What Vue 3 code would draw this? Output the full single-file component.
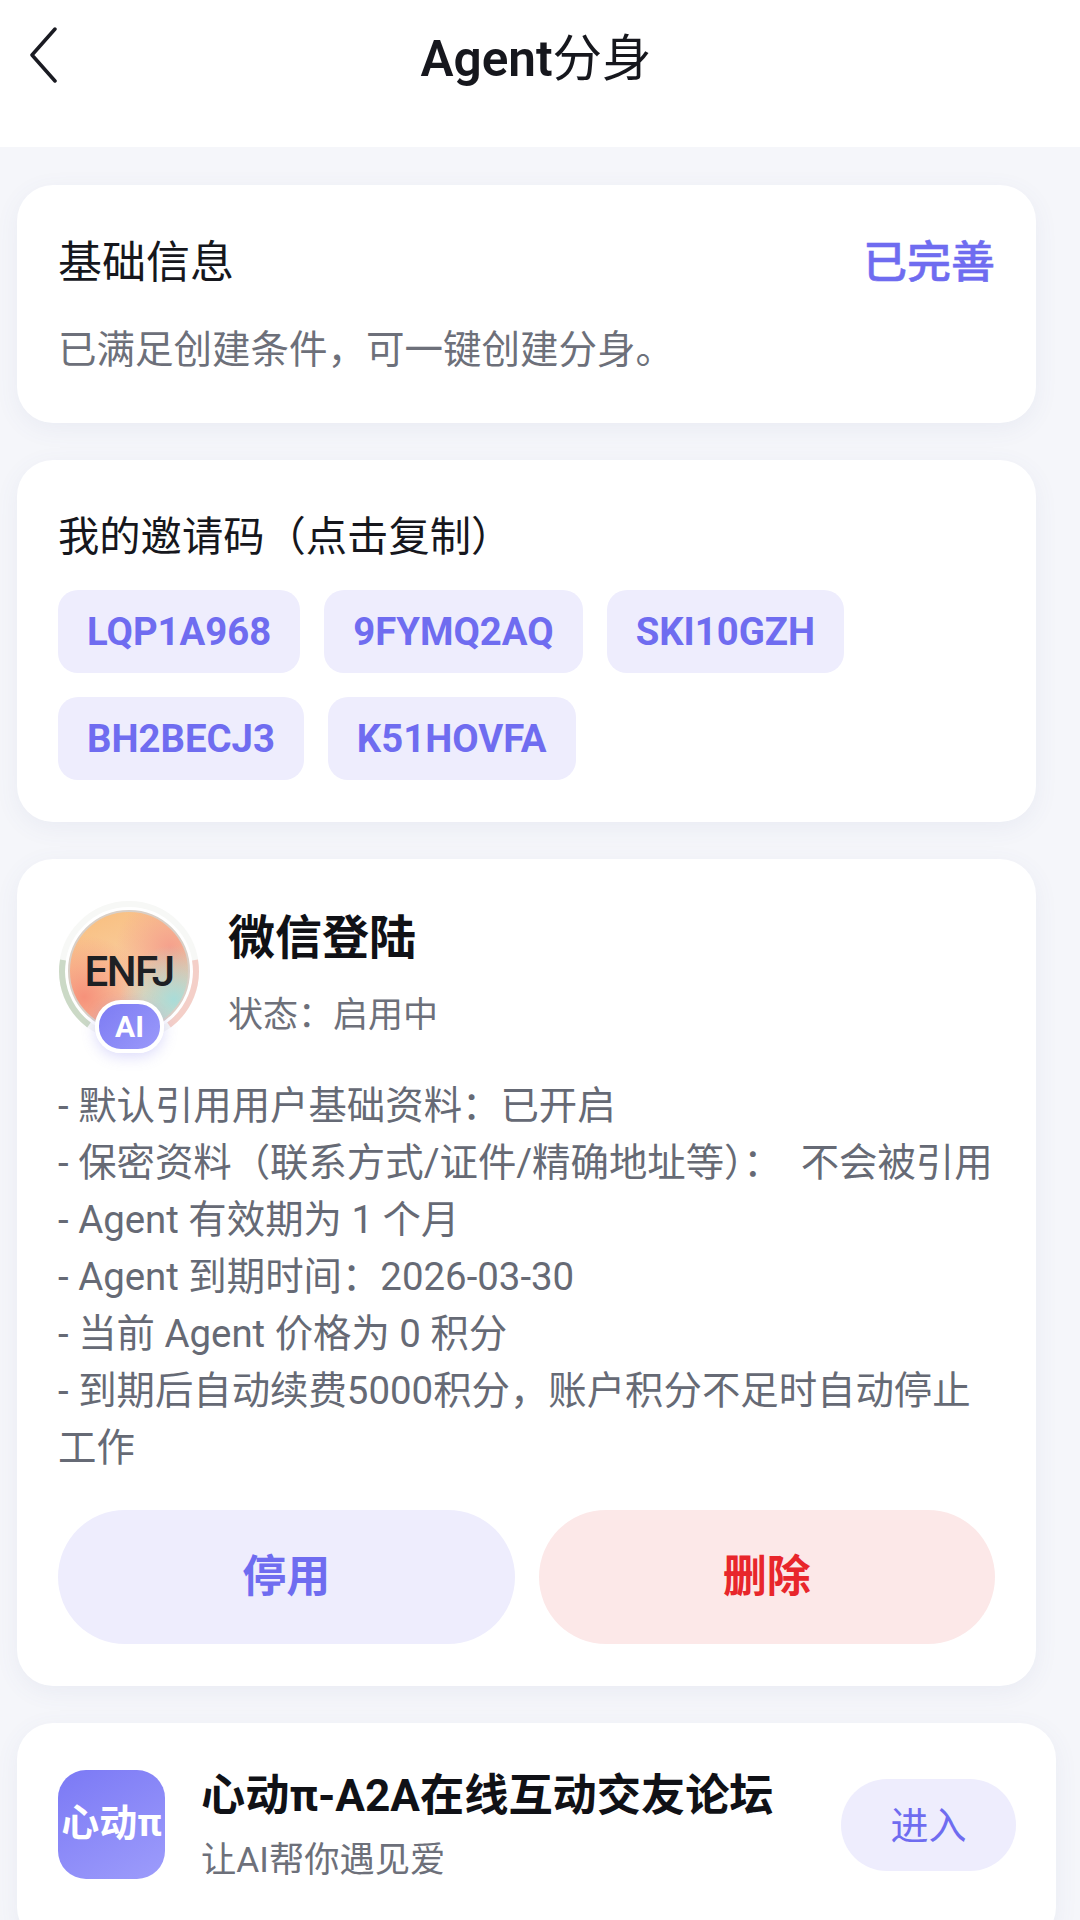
<script setup>
import { ref } from 'vue';

const codes = ref(['LQP1A968', '9FYMQ2AQ', 'SKI10GZH', 'BH2BECJ3', 'K51HOVFA']);

const rules = [
    '- 默认引用用户基础资料：已开启',
    '- 保密资料（联系方式/证件/精确地址等）：\u00a0 不会被引用',
    '- Agent 有效期为 1 个月',
    '- Agent 到期时间：2026-03-30',
    '- 当前 Agent 价格为 0 积分',
    '- 到期后自动续费5000积分，账户积分不足时自动停止工作'
];
</script>

<template>
    <div class="page">
        <header class="topbar">
            <button class="back" aria-label="返回">
                <svg width="32" height="58" viewBox="0 0 32 58" fill="none">
                    <path d="M27 2L4 28L27 54" stroke="#1a1b22" stroke-width="3.5" stroke-linecap="round"
                        stroke-linejoin="round" />
                </svg>
            </button>
            <h1 class="page-title"><b>Agent</b>分身</h1>
        </header>

        <main class="content">
            <section class="card info-card">
                <div class="info-head">
                    <span class="info-title">基础信息</span>
                    <span class="info-state">已完善</span>
                </div>
                <p class="info-desc">已满足创建条件，可一键创建分身。</p>
            </section>

            <section class="card code-card">
                <div class="code-title">我的邀请码（点击复制）</div>
                <div class="code-list">
                    <span v-for="code in codes" :key="code" class="code">{{ code }}</span>
                </div>
            </section>

            <section class="card agent-card">
                <div class="agent-head">
                    <div class="avatar">
                        <svg class="ring" width="142" height="142" viewBox="0 0 142 142" fill="none">
                            <circle cx="71" cy="71" r="67" stroke="#f7f8f6" stroke-width="6" />
                            <path d="M5 60A67 67 0 0 0 31 125" stroke="#cbd9c6" stroke-width="6" />
                            <path d="M137 60A67 67 0 0 1 111 125" stroke="#f4cfc8" stroke-width="6" />
                        </svg>
                        <div class="disc">ENFJ</div>
                        <div class="ai-badge">AI</div>
                    </div>
                    <div class="agent-meta">
                        <div class="agent-name">微信登陆</div>
                        <div class="agent-status">状态：启用中</div>
                    </div>
                </div>

                <ul class="rules">
                    <li v-for="line in rules" :key="line">{{ line }}</li>
                </ul>

                <div class="actions">
                    <button class="action stop">停用</button>
                    <button class="action remove">删除</button>
                </div>
            </section>

            <section class="card app-card">
                <div class="app-icon">心动π</div>
                <div class="app-meta">
                    <div class="app-name">心动π-A2A在线互动交友论坛</div>
                    <div class="app-sub">让AI帮你遇见爱</div>
                </div>
                <button class="enter">进入</button>
            </section>
        </main>
    </div>
</template>

<style>
html,
body {
    margin: 0;
    background: #f5f6fa;
}
</style>

<style scoped>
.page {
    width: 1080px;
    height: 1920px;
    overflow: hidden;
    background: #f5f6fa;
    font-family: Roboto, "Noto Sans CJK SC", sans-serif;
    color: #16171d;
}

.topbar {
    height: 147px;
    background: #fff;
    position: relative;
    display: flex;
    justify-content: center;
    padding: 29px 8px 0 0;
    box-sizing: border-box;
}

.back {
    position: absolute;
    left: 28px;
    top: 27px;
    padding: 0;
    border: none;
    background: none;
    line-height: 0;
}

.page-title {
    margin: 0;
    font-size: 49.5px;
    line-height: 60px;
    font-weight: 400;
}

.page-title b {
    font-weight: 600;
}

.content {
    display: flex;
    flex-direction: column;
    gap: 37px;
    padding: 38px 44px 0 17px;
}

.card {
    background: #fff;
    border-radius: 36px;
    box-shadow: 0 6px 24px rgba(90, 100, 150, 0.07);
    box-sizing: border-box;
    padding: 0 41px;
}

.info-card {
    height: 238px;
    padding-top: 44px;
}

.info-head {
    display: flex;
    justify-content: space-between;
    align-items: center;
    height: 60px;
}

.info-title {
    font-size: 44px;
}

.info-state {
    font-size: 44px;
    font-weight: 500;
    -webkit-text-stroke: 0.5px #6f6cf0;
    color: #6f6cf0;
}

.info-desc {
    margin: 33px 0 0;
    font-size: 38.5px;
    line-height: 56px;
    color: #6d707a;
}

.code-card {
    height: 362px;
    padding-top: 47px;
}

.code-title {
    font-size: 41.3px;
    line-height: 60px;
}

.code-list {
    display: flex;
    flex-wrap: wrap;
    gap: 24px;
    margin-top: 23px;
}

.code {
    height: 83px;
    line-height: 83px;
    padding: 0 29px;
    border-radius: 20px;
    background: #eeedfd;
    color: #6f6cf0;
    font-size: 38.3px;
    font-weight: 700;
}

.agent-card {
    height: 827px;
    padding-top: 41px;
}

.agent-head {
    display: flex;
    gap: 28px;
    height: 177px;
}

.avatar {
    position: relative;
    width: 142px;
    height: 142px;
    flex: none;
}

.ring {
    position: absolute;
    left: 0;
    top: 0;
}

.disc {
    position: absolute;
    left: 10px;
    top: 10px;
    width: 122px;
    height: 122px;
    box-sizing: border-box;
    border-radius: 50%;
    border: 2px solid #d9cfc6;
    background:
        radial-gradient(circle at 88% 74%, #a9dcd8 0, rgba(169, 220, 216, 0) 40%),
        radial-gradient(circle at 12% 72%, #f6917a 0, rgba(246, 145, 122, 0) 46%),
        radial-gradient(circle at 85% 30%, #f5a08c 0, rgba(245, 160, 140, 0) 42%),
        linear-gradient(160deg, #f9bd7c, #f8d2a8 60%, #f3cfc0);
    display: flex;
    align-items: center;
    justify-content: center;
    font-size: 42px;
    letter-spacing: -1.5px;
    font-weight: 500;
    color: #1e2024;
}

.ai-badge {
    position: absolute;
    left: 37px;
    top: 100px;
    width: 61px;
    height: 45px;
    border: 4px solid #fff;
    border-radius: 26px;
    background: linear-gradient(135deg, #7d7cf3, #9a99fa);
    box-shadow: 0 4px 14px rgba(120, 115, 240, 0.25);
    color: #fff;
    font-size: 30px;
    font-weight: 700;
    line-height: 45px;
    text-align: center;
}

.agent-meta {
    padding-top: 8px;
}

.agent-name {
    font-size: 47px;
    line-height: 60px;
    font-weight: 700;
    color: #101116;
}

.agent-status {
    margin-top: 24px;
    font-size: 35px;
    line-height: 48px;
    color: #6d707a;
}

.rules {
    list-style: none;
    margin: 0;
    padding: 0;
    font-size: 38.4px;
    line-height: 57px;
    color: #666a75;
}

.actions {
    display: flex;
    gap: 24px;
    margin-top: 34px;
}

.action {
    flex: 1;
    height: 134px;
    padding: 0 0 8px;
    border: none;
    border-radius: 67px;
    font-family: inherit;
    font-size: 44px;
    font-weight: 700;
}

.stop {
    background: #eeedfd;
    color: #6f6cf0;
}

.remove {
    background: #fce8e8;
    color: #e8262b;
}

.app-card {
    margin-right: -20px;
    height: 220px;
    display: flex;
    align-items: flex-start;
    padding: 47px 40px 0 41px;
}

.app-icon {
    width: 107px;
    height: 109px;
    flex: none;
    border-radius: 28px;
    background: linear-gradient(150deg, #7b79f5, #9d9cfb);
    color: #fff;
    font-size: 38px;
    font-weight: 700;
    line-height: 107px;
    text-align: center;
    white-space: nowrap;
    overflow: hidden;
}

.app-meta {
    flex: 1;
    margin-left: 36px;
}

.app-name {
    font-size: 44.2px;
    line-height: 52px;
    font-weight: 700;
    color: #101116;
}

.app-sub {
    margin-top: 14px;
    font-size: 35.3px;
    line-height: 48px;
    color: #6d707a;
}

.enter {
    width: 175px;
    height: 92px;
    margin-top: 9px;
    padding: 0 0 6px;
    border: none;
    border-radius: 46px;
    background: #eeedfd;
    color: #6f6cf0;
    font-family: inherit;
    font-size: 38px;
}
</style>
